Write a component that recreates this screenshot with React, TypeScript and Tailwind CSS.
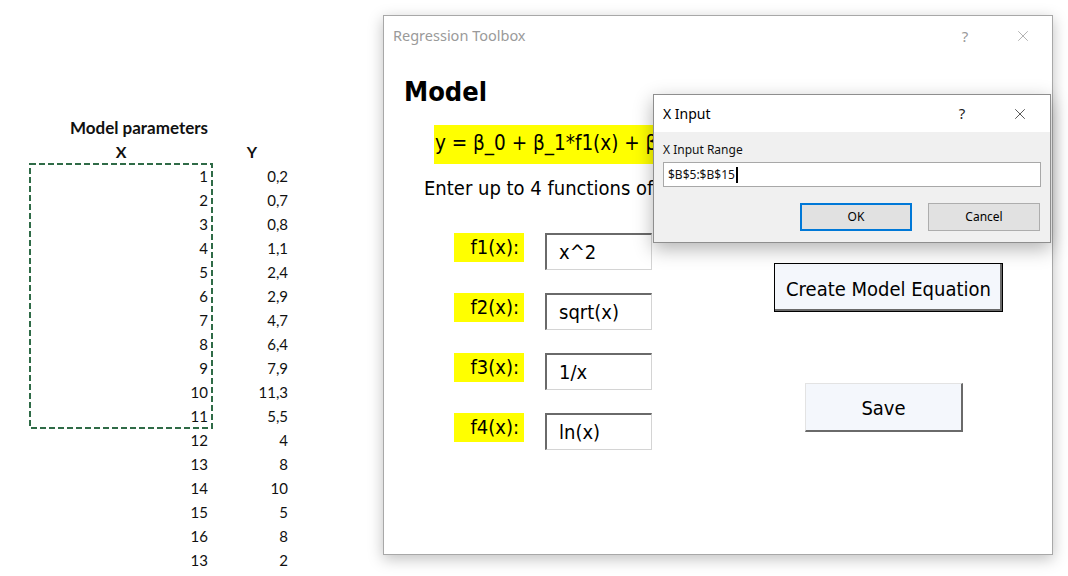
import { X } from "lucide-react";

const xValues = [1, 2, 3, 4, 5, 6, 7, 8, 9, 10, 11];
const xRest = [12, 13, 14, 15, 16, 13];
const yValues = ["0,2", "0,7", "0,8", "1,1", "2,4", "2,9", "4,7", "6,4", "7,9", "11,3", "5,5", "4", "8", "10", "5", "8", "2"];

const functions = [
  { label: "f1(x):", value: "x^2" },
  { label: "f2(x):", value: "sqrt(x)" },
  { label: "f3(x):", value: "1/x" },
  { label: "f4(x):", value: "ln(x)" },
];

const Sheet = () => {
  return (
    <div className="w-[383px] shrink-0 pt-[116px] font-['Lato','Liberation_Sans',sans-serif] text-[15px] text-[#111]">
      <div className="h-[24px] w-[248px] pl-[30px] text-center text-[17px] font-bold leading-[24px]">
        Model parameters
      </div>
      <div className="flex pl-[30px]">
        {/* column B */}
        <div className="flex w-[182px] flex-col">
          <div className="h-[24px] text-center text-[16px] font-bold leading-[24px]">X</div>
          <div className="relative flex flex-col">
            {xValues.map((v) => (
              <div key={v} className="h-[24px] pr-[4px] text-right leading-[24px]">
                {v}
              </div>
            ))}
            <svg className="absolute -left-[1px] -top-[1px] h-[266px] w-[184px]" viewBox="0 0 184 266">
              <rect x="1" y="1" width="182" height="264" fill="none" stroke="#2f6b47" strokeWidth="2" strokeDasharray="6 3" />
            </svg>
          </div>
          {xRest.map((v, i) => (
            <div key={i} className="h-[24px] pr-[4px] text-right leading-[24px]">
              {v}
            </div>
          ))}
        </div>
        {/* column C */}
        <div className="flex w-[80px] flex-col">
          <div className="h-[24px] text-center text-[16px] font-bold leading-[24px]">Y</div>
          {yValues.map((v, i) => (
            <div key={i} className="h-[24px] pr-[4px] text-right leading-[24px]">
              {v}
            </div>
          ))}
        </div>
      </div>
    </div>
  );
};

const TitleButtons = ({ dark }: { dark: boolean }) => (
  <div className={`flex items-center ${dark ? "text-[#222]" : "text-[#9a9a9a]"}`}>
    <span className="w-[30px] text-center text-[15px]">?</span>
    <span className="ml-[28px] flex w-[30px] justify-center">
      <X size={18} strokeWidth={1} />
    </span>
  </div>
);

const MainWindow = () => {
  return (
    <div className="mt-[15px] flex h-[540px] w-[670px] shrink-0 flex-col border border-[#a8a8a8] bg-white shadow-[0_4px_14px_rgba(0,0,0,0.25)]">
      <div className="flex h-[40px] items-center justify-between pl-[9px] pr-[14px] font-['Noto_Sans',sans-serif] text-[14.5px] text-[#9a9a9a]">
        <span>Regression Toolbox</span>
        <TitleButtons dark={false} />
      </div>

      <div className="font-['DejaVu_Sans_Condensed','DejaVu_Sans',sans-serif] text-black">
        <h1 className="mt-[20px] ml-[20px] h-[32px] text-[27px] font-bold leading-[32px]">Model</h1>

        <div className="mt-[17px] ml-[50px] h-[39px] w-[240px] bg-[#ffff00] pl-[1px] text-[20.5px] leading-[37px] whitespace-nowrap">
          y = β_0 + β_1*f1(x) + β
        </div>

        <p className="mt-[12px] ml-[40px] h-[24px] whitespace-nowrap text-[20px] leading-[24px]">
          Enter up to 4 functions of
        </p>

        <div className="mt-[33px] flex">
          <div className="ml-[70px] flex flex-col gap-[23px]">
            {functions.map((f) => (
              <div key={f.label} className="flex items-start">
                <div className="h-[29px] w-[70px] bg-[#ffff00] pr-[5px] text-right text-[20px] leading-[28px]">
                  {f.label}
                </div>
                <div className="ml-[21px] flex h-[37px] w-[107px] items-center border-t-2 border-l-2 border-r border-b border-t-[#6a6a6a] border-l-[#6a6a6a] border-r-[#d4d4d4] border-b-[#d4d4d4] bg-white pl-[12px] text-[20px]">
                  {f.value}
                </div>
              </div>
            ))}
          </div>

          <div className="ml-[122px] flex flex-col pt-[30px]">
            <button className="flex h-[49px] w-[229px] items-center justify-center border border-black bg-[#f4f7fc] pt-[2px] shadow-[inset_-2px_-2px_0_#6a6a6a] text-[20px]">
              Create Model Equation
            </button>
            <button className="mt-[71px] ml-[31px] flex h-[49px] w-[158px] items-center justify-center border-t border-l border-r-2 border-b-2 border-t-[#e3e3e3] border-l-[#e3e3e3] border-r-[#6a6a6a] border-b-[#6a6a6a] bg-[#f4f7fc] pt-[2px] text-[20px]">
              Save
            </button>
          </div>
        </div>
      </div>
    </div>
  );
};

const InputDialog = () => {
  return (
    <div className="absolute left-[653px] top-[94px] flex h-[149px] w-[398px] flex-col border border-[#8e8e8e] bg-[#f0f0f0] font-['Noto_Sans',sans-serif] shadow-[0_6px_18px_rgba(0,0,0,0.3)]">
      <div className="flex h-[37px] items-center justify-between bg-white pl-[9px] pr-[15px] text-[14px] text-black">
        <span>X Input</span>
        <TitleButtons dark={true} />
      </div>
      <div className="flex flex-col px-[9px]">
        <div className="mt-[9px] h-[18px] text-[12px] leading-[18px] text-[#111]">X Input Range</div>
        <div className="mt-[3px] flex h-[25px] w-[378px] items-center border border-[#a8a8a8] bg-white pl-[4px] text-[12px] text-[#111]">
          $B$5:$B$15
          <span className="ml-[1px] inline-block h-[16px] w-[2px] bg-black" />
        </div>
        <div className="mt-[16px] flex justify-end gap-[16px] pr-[1px]">
          <button className="flex h-[28px] w-[112px] items-center justify-center border-2 border-[#0078d7] bg-[#e1e1e1] text-[12px] text-black">
            OK
          </button>
          <button className="flex h-[28px] w-[112px] items-center justify-center border border-[#adadad] bg-[#e1e1e1] text-[12px] text-black">
            Cancel
          </button>
        </div>
      </div>
    </div>
  );
};

export default function App() {
  return (
    <div className="relative flex h-[576px] w-[1068px] overflow-hidden bg-white">
      <Sheet />
      <MainWindow />
      <InputDialog />
    </div>
  );
}
